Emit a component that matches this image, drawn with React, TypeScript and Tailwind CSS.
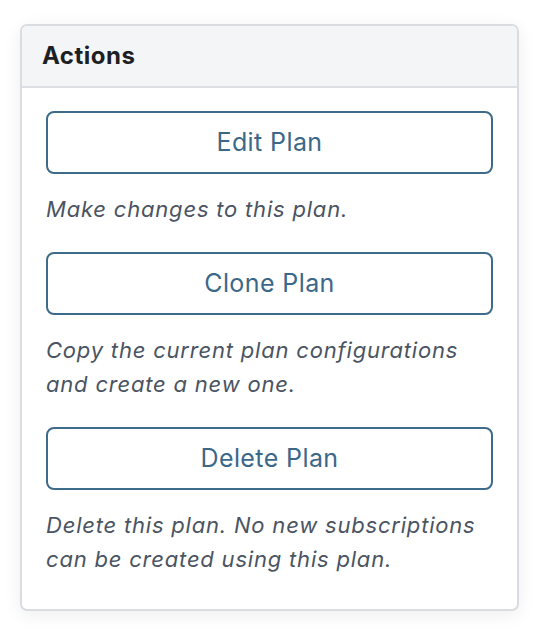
const actions = [
  { label: 'Edit Plan', help: 'Make changes to this plan.' },
  { label: 'Clone Plan', help: 'Copy the current plan configurations and create a new one.' },
  { label: 'Delete Plan', help: 'Delete this plan. No new subscriptions can be created using this plan.' },
];

export default function App() {
  return (
    <div className="min-h-[634px] bg-white pt-[24px] pl-[20px] font-['Inter',sans-serif]">
      <div className="w-[499px] rounded-[7px] border-2 border-[#d9dce1] bg-white shadow-[0_4px_18px_rgba(0,0,0,0.07)] overflow-hidden">
        <div className="h-[62px] flex items-center px-[20px] bg-[#f4f5f7] border-b-2 border-[#dcdfe4]">
          <h2 className="text-[24px] font-bold text-[#1d1f24] tracking-[0.5px]">Actions</h2>
        </div>
        <div className="pl-[24px] pr-[24px] pt-[23px] pb-[33px] flex flex-col gap-[26px]">
          {actions.map(a => (
            <div key={a.label}>
              <button className="w-full h-[63px] rounded-[8px] border-2 border-[#3f6b8a] text-[25px] tracking-[0.4px] text-[#3b6888] bg-white">
                {a.label}
              </button>
              <p className="mt-[18px] text-[22px] leading-[34px] italic tracking-[0.8px] text-[#4a5462]">{a.help}</p>
            </div>
          ))}
        </div>
      </div>
    </div>
  );
}
